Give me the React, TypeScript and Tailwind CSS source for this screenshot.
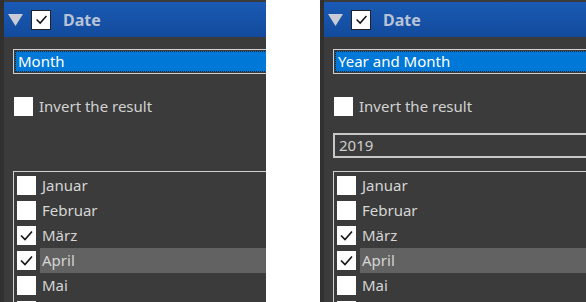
const months = [
  { name: "Januar", checked: false },
  { name: "Februar", checked: false },
  { name: "März", checked: true },
  { name: "April", checked: true, selected: true },
  { name: "Mai", checked: false },
  { name: "", checked: false },
];

function Check({ size = 19 }: { size?: number }) {
  return (
    <svg width={size} height={size} viewBox="0 0 19 19">
      <polyline points="4,9.5 8,13.5 15,5.5" fill="none" stroke="#111" strokeWidth="1.6" />
    </svg>
  );
}

function Box({ checked, className = "" }: { checked?: boolean; className?: string }) {
  return (
    <div className={"w-[19px] h-[19px] bg-white flex items-center justify-center shrink-0 " + className}>
      {checked && <Check />}
    </div>
  );
}

function Panel({ value, showYear }: { value: string; showYear: boolean }) {
  return (
    <div className="w-[266px] h-[302px] overflow-hidden bg-[#3b3b3b] border-l-4 border-[#303030] pt-[2px] flex flex-col">
      <div className="h-[35px] shrink-0 bg-gradient-to-b from-[#1a5bb5] to-[#124a9c] flex items-center">
        <svg width="15" height="12" viewBox="0 0 15 12" className="ml-[4px]">
          <polygon points="0,0 15,0 7.5,12" fill="#c9ccd4" />
        </svg>
        <div className="ml-[8px] w-[20px] h-[20px] bg-white border border-[#222] flex items-center justify-center">
          <Check size={17} />
        </div>
        <span className="ml-[12px] text-[16px] font-bold text-[#b9c3d6]">Date</span>
      </div>

      <div className="pl-[9px]">
        <div className="mt-[12px] w-[300px] h-[25px] border border-[#cfcfcf] p-[1px]">
          <div className="h-full border border-dotted border-[#222] bg-[#0078d7] flex items-center pl-[2px] text-white text-[15px] leading-none">
            {value}
          </div>
        </div>

        <div className="mt-[22px] flex items-center h-[20px]">
          <Box className="ml-[1px]" />
          <span className="ml-[6px] text-[15px] text-[#d2d2d2]">Invert the result</span>
        </div>

        <div
          className={
            "mt-[17px] w-[300px] h-[25px] border-2 border-[#c8c8c8] flex items-center pl-[4px] text-[15px] text-[#cfcfcf] " +
            (showYear ? "" : "invisible")
          }
        >
          2019
        </div>

        <div className="mt-[13px] w-[300px] border-t border-l border-[#d0d0d0] pt-[1px] pl-[3px]">
          {months.map((m, i) => (
            <div key={i} className="h-[25px] flex items-center">
              <Box checked={m.checked} />
              <div
                className={
                  "ml-[4px] h-full flex-1 flex items-center pl-[2px] text-[15px] text-[#d6d6d6] " +
                  (m.selected ? "bg-[#626262]" : "")
                }
              >
                {m.name}
              </div>
            </div>
          ))}
        </div>
      </div>
    </div>
  );
}

export default function App() {
  return (
    <div className="w-[586px] h-[302px] bg-white flex justify-between overflow-hidden" style={{ fontFamily: '"Noto Sans", sans-serif' }}>
      <Panel value="Month" showYear={false} />
      <Panel value="Year and Month" showYear={true} />
    </div>
  );
}
